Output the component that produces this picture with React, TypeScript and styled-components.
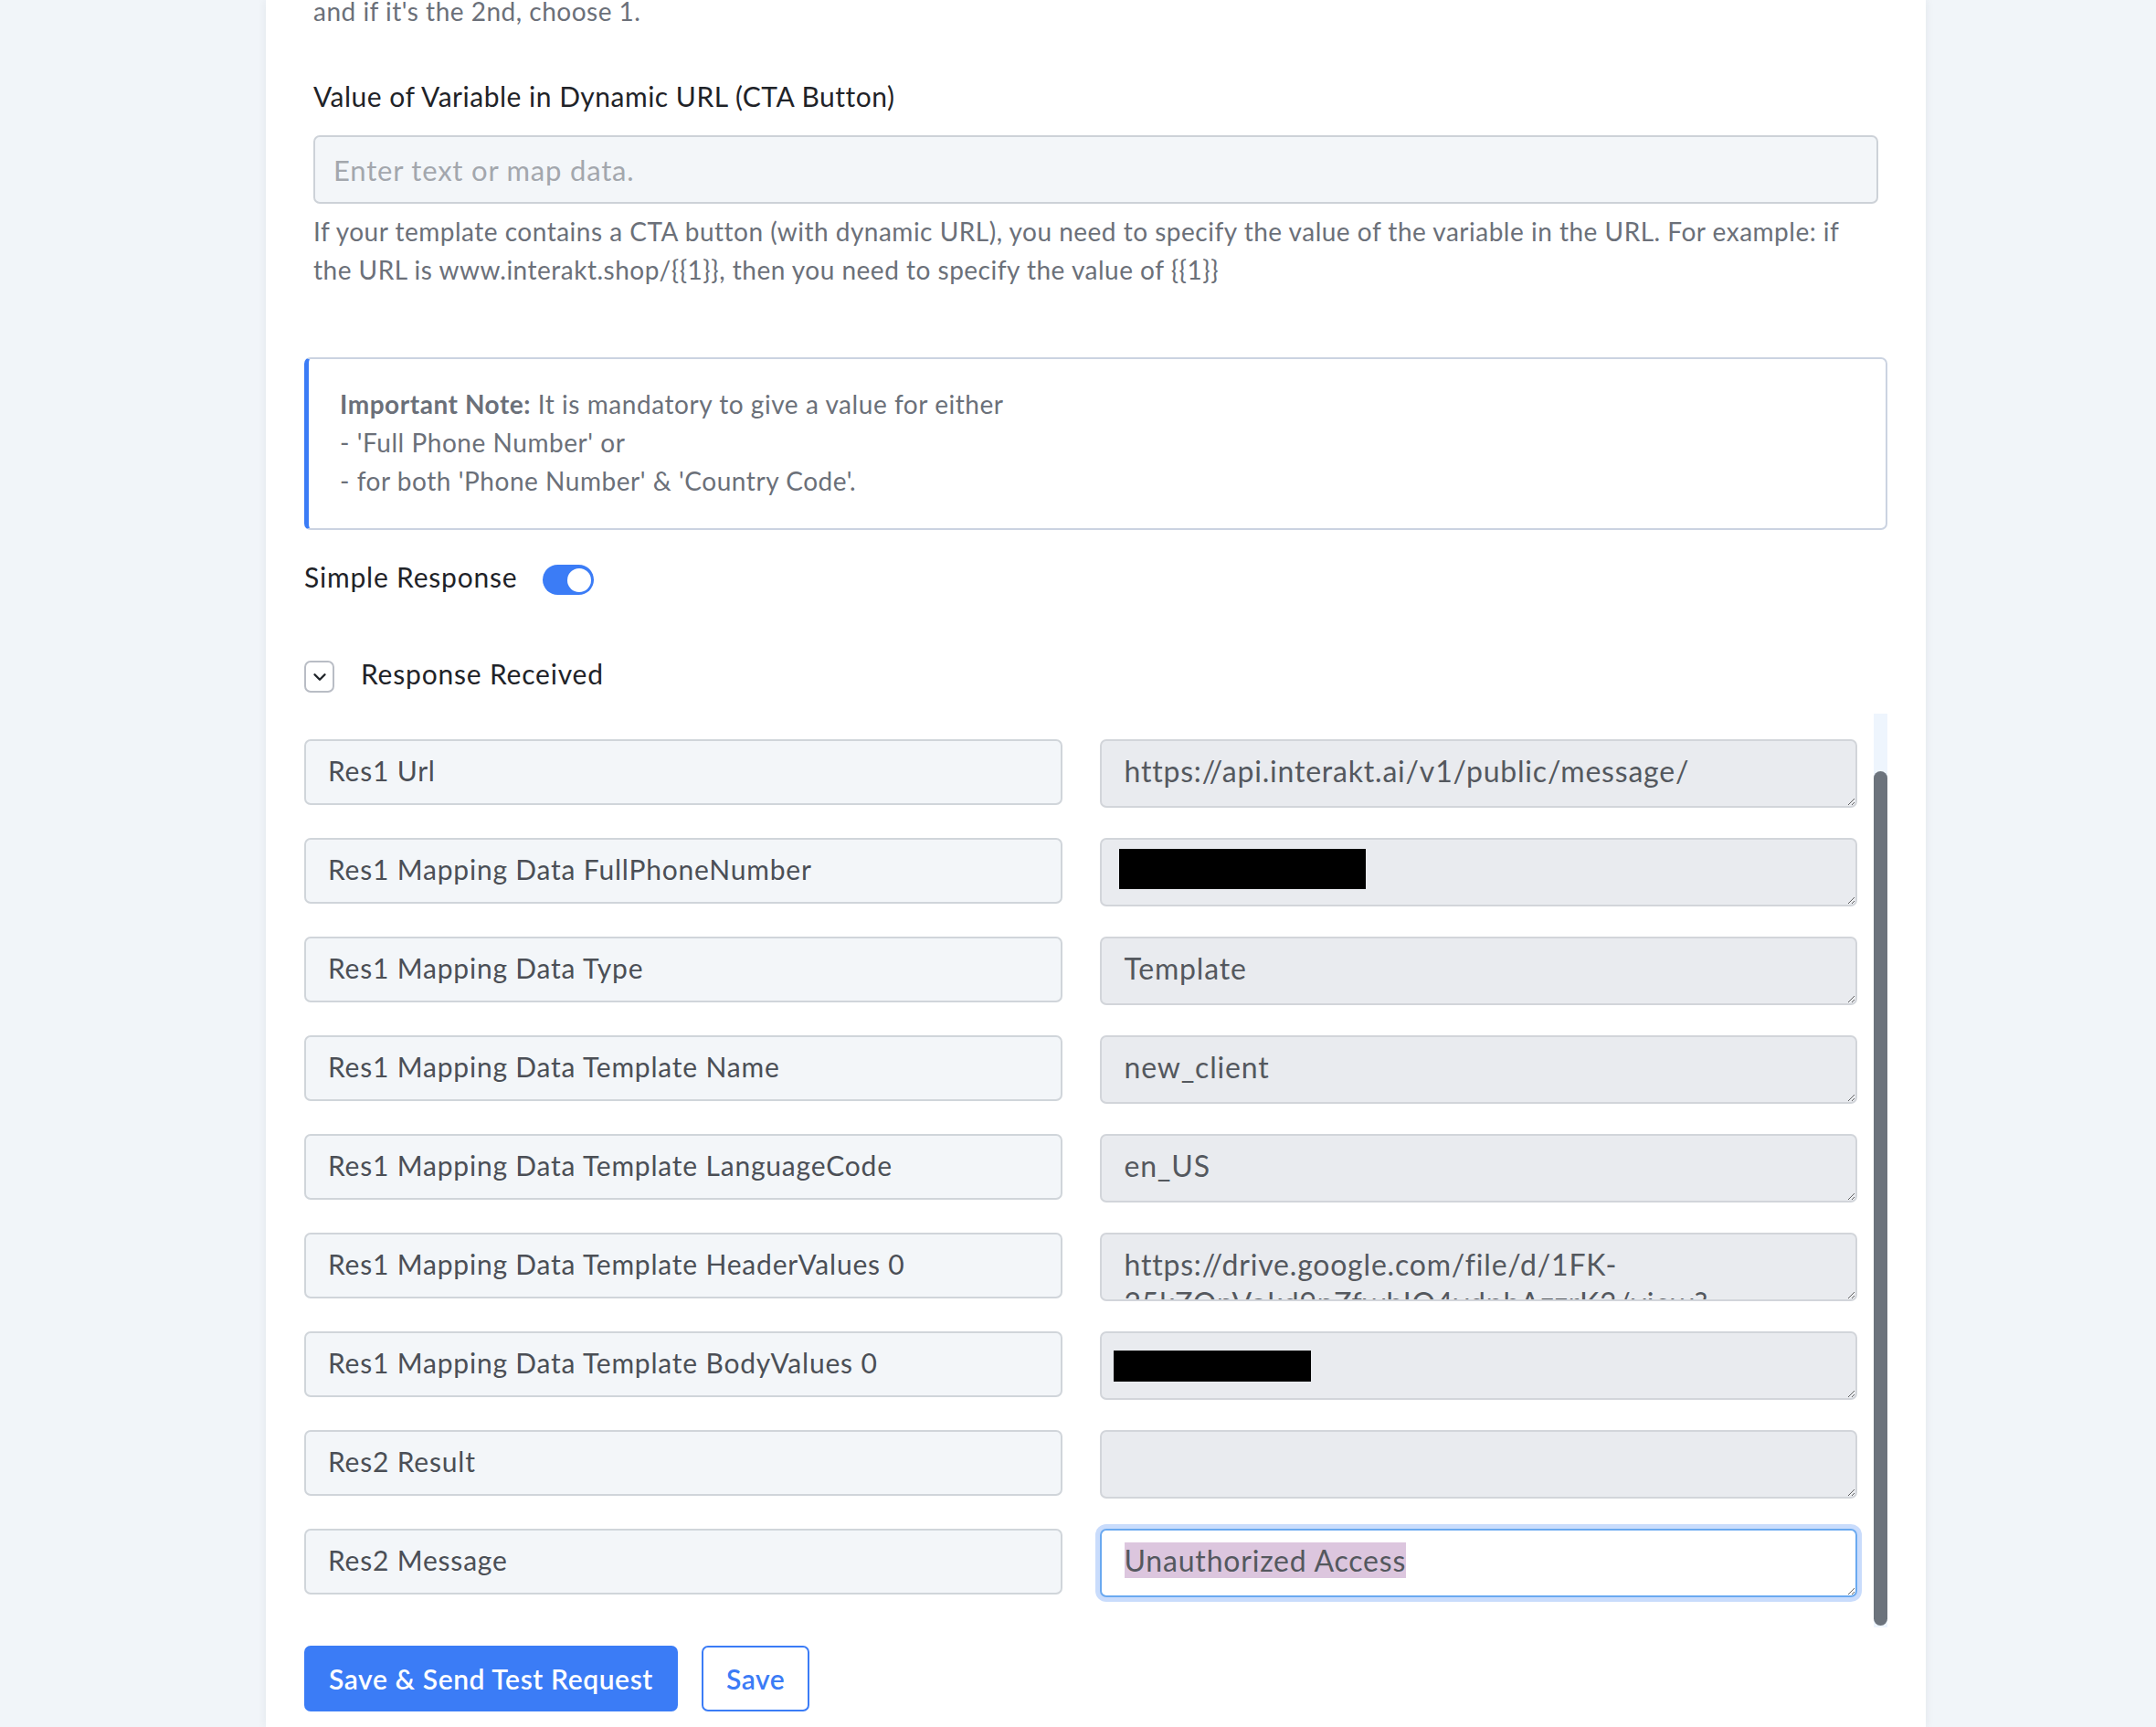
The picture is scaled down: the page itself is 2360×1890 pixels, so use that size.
import React from "react";
import styled, { createGlobalStyle } from "styled-components";
import { ChevronDown } from "lucide-react";

const GlobalStyle = createGlobalStyle`
  html, body { margin: 0; padding: 0; }
  body {
    background: #f1f5f9;
    font-family: Lato, "Open Sans", "Noto Sans", sans-serif;
    -webkit-font-smoothing: antialiased;
  }
  * { box-sizing: border-box; }
`;

const Page = styled.div`
  height: 1890px;
  overflow: hidden;
  padding-left: 291px;
`;

const Card = styled.div`
  width: 1817px;
  height: 1890px;
  background: #ffffff;
  box-shadow: 0 0 10px rgba(30, 41, 59, 0.07);
  padding: 0 42px;
  display: flex;
  flex-direction: column;
`;

const TopSection = styled.div`
  padding: 0 10px;
  display: flex;
  flex-direction: column;
`;

const Text = styled.div<{ $color?: string; $mt?: number; $size?: number; $ls?: number }>`
  font-size: ${(p) => p.$size ?? 28}px;
  letter-spacing: ${(p) => p.$ls ?? 0.5}px;
  line-height: 42px;
  color: ${(p) => p.$color || "#6b7079"};
  margin-top: ${(p) => p.$mt ?? 0}px;
`;

const TextInput = styled.div`
  margin-top: 22px;
  height: 75px;
  background: #f3f6f9;
  border: 2px solid #cdd2d8;
  border-radius: 7px;
  padding: 0 20px;
  display: flex;
  align-items: center;
  font-size: 31px;
  letter-spacing: 0.8px;
  color: #a3a7ad;
`;

const NoteBox = styled.div`
  margin-top: 75px;
  border: 2px solid #cbd3e1;
  border-left: 5px solid #3b7cf6;
  border-radius: 7px;
  padding: 28px 34px 31px;
  font-size: 28px;
  letter-spacing: 0.55px;
  line-height: 42px;
  color: #6b7079;
`;

const Strong = styled.strong`
  font-weight: 700;
  color: #6b7079;
`;

const SimpleRow = styled.div`
  margin-top: 38px;
  display: flex;
  align-items: center;
  gap: 28px;
  height: 33px;
`;

const RowLabel = styled.span`
  font-size: 30px;
  letter-spacing: 0.8px;
  color: #1f2328;
  line-height: 33px;
  margin-top: -6px;
`;

const Toggle = styled.div`
  width: 56px;
  height: 33px;
  border-radius: 17px;
  background: #3b7cf6;
  display: flex;
  align-items: center;
  justify-content: flex-end;
  padding: 0 3px;
`;

const Knob = styled.div`
  width: 26px;
  height: 26px;
  border-radius: 50%;
  background: #ffffff;
`;

const SectionHeader = styled.div`
  margin-top: 72px;
  display: flex;
  align-items: center;
  gap: 29px;
  height: 35px;
`;

const ChevronBox = styled.div`
  width: 33px;
  height: 35px;
  border: 2px solid #b9bdc5;
  border-radius: 7px;
  display: flex;
  align-items: center;
  justify-content: center;
  color: #1f2328;
`;

const ScrollArea = styled.div`
  margin-top: 23px;
  height: 1000px;
  display: flex;
  gap: 18px;
`;

const RowsGrid = styled.div`
  flex: 1;
  padding-top: 28px;
  display: grid;
  grid-template-columns: 1fr 1fr;
  column-gap: 41px;
  row-gap: 33px;
  align-content: start;
  align-items: start;
`;

const KeyBox = styled.div`
  height: 72px;
  background: #f3f6f9;
  border: 2px solid #d0d5da;
  border-radius: 7px;
  padding: 11px 24px 0;
  font-size: 30px;
  letter-spacing: 0.8px;
  line-height: 42px;
  color: #4b4f56;
  white-space: nowrap;
  overflow: hidden;
`;

const ValueBox = styled.div<{ $focused?: boolean }>`
  height: 75px;
  background: ${(p) => (p.$focused ? "#ffffff" : "#e9ebef")};
  border: 2px solid ${(p) => (p.$focused ? "#6aa9f0" : "#d2d5da")};
  box-shadow: ${(p) => (p.$focused ? "0 0 0 5px #c9dcfc" : "none")};
  border-radius: 7px;
  padding: 12px 25px 0;
  font-size: 32px;
  letter-spacing: 0.8px;
  line-height: 42px;
  color: #54585e;
  overflow: hidden;
  resize: vertical;
  overflow-wrap: anywhere;
`;

const Redaction = styled.div<{ $w: number; $h: number; $x: number; $y: number }>`
  width: ${(p) => p.$w}px;
  height: ${(p) => p.$h}px;
  margin-left: ${(p) => p.$x}px;
  margin-top: ${(p) => p.$y}px;
  background: #000000;
`;

const Selected = styled.span`
  background: #dcc6de;
`;

const ScrollTrack = styled.div`
  width: 15px;
  background: #eef5fd;
  display: flex;
  flex-direction: column;
  padding-top: 63px;
  padding-bottom: 2px;
`;

const ScrollThumb = styled.div`
  flex: 1;
  background: #6c737c;
  border-radius: 8px;
`;

const ButtonRow = styled.div`
  margin-top: 20px;
  display: flex;
  gap: 26px;
`;

const Button = styled.button<{ $primary?: boolean }>`
  height: 72px;
  padding: 0 25px;
  border-radius: 7px;
  border: 2px solid #3b7cf6;
  background: ${(p) => (p.$primary ? "#3b7cf6" : "#ffffff")};
  color: ${(p) => (p.$primary ? "#ffffff" : "#3b7cf6")};
  font-family: Lato, "Open Sans", sans-serif;
  font-size: 30px;
  letter-spacing: 0.6px;
  font-weight: 600;
  cursor: pointer;
`;

type Row = {
  key: string;
  value?: React.ReactNode;
  focused?: boolean;
};

const rows: Row[] = [
  { key: "Res1 Url", value: "https://api.interakt.ai/v1/public/message/" },
  {
    key: "Res1 Mapping Data FullPhoneNumber",
    value: <Redaction $w={270} $h={44} $x={-6} $y={-2} />,
  },
  { key: "Res1 Mapping Data Type", value: "Template" },
  { key: "Res1 Mapping Data Template Name", value: "new_client" },
  { key: "Res1 Mapping Data Template LanguageCode", value: "en_US" },
  {
    key: "Res1 Mapping Data Template HeaderValues 0",
    value: "https://drive.google.com/file/d/1FK-25kZQnVokd9nZfwbIO4vdpbAzzrK3/view?usp=sharing",
  },
  {
    key: "Res1 Mapping Data Template BodyValues 0",
    value: <Redaction $w={216} $h={34} $x={-12} $y={7} />,
  },
  { key: "Res2 Result", value: "" },
  {
    key: "Res2 Message",
    value: <Selected>Unauthorized Access</Selected>,
    focused: true,
  },
];

const helpText =
  "If your template contains a CTA button (with dynamic URL), you need to specify the value of the variable in the URL. For example: if the URL is www.interakt.shop/{{1}}, then you need to specify the value of {{1}}";

export default function App() {
  return (
    <>
      <GlobalStyle />
      <Page>
        <Card>
          <TopSection>
            <Text $mt={-9}>and if it's the 2nd, choose 1.</Text>
            <Text $mt={51} $color="#1f2328" $size={30} $ls={0.5}>
              Value of Variable in Dynamic URL (CTA Button)
            </Text>
            <TextInput>Enter text or map data.</TextInput>
            <Text $mt={9}>{helpText}</Text>
          </TopSection>

          <NoteBox>
            <Strong>Important Note:</Strong> It is mandatory to give a value for either
            <br />- 'Full Phone Number' or
            <br />- for both 'Phone Number' &amp; 'Country Code'.
          </NoteBox>

          <SimpleRow>
            <RowLabel>Simple Response</RowLabel>
            <Toggle>
              <Knob />
            </Toggle>
          </SimpleRow>

          <SectionHeader>
            <ChevronBox>
              <ChevronDown size={22} strokeWidth={2.6} />
            </ChevronBox>
            <RowLabel>Response Received</RowLabel>
          </SectionHeader>

          <ScrollArea>
            <RowsGrid>
              {rows.map((r) => (
                <React.Fragment key={r.key}>
                  <KeyBox>{r.key}</KeyBox>
                  <ValueBox $focused={r.focused}>{r.value}</ValueBox>
                </React.Fragment>
              ))}
            </RowsGrid>
            <ScrollTrack>
              <ScrollThumb />
            </ScrollTrack>
          </ScrollArea>

          <ButtonRow>
            <Button $primary>Save &amp; Send Test Request</Button>
            <Button>Save</Button>
          </ButtonRow>
        </Card>
      </Page>
    </>
  );
}
